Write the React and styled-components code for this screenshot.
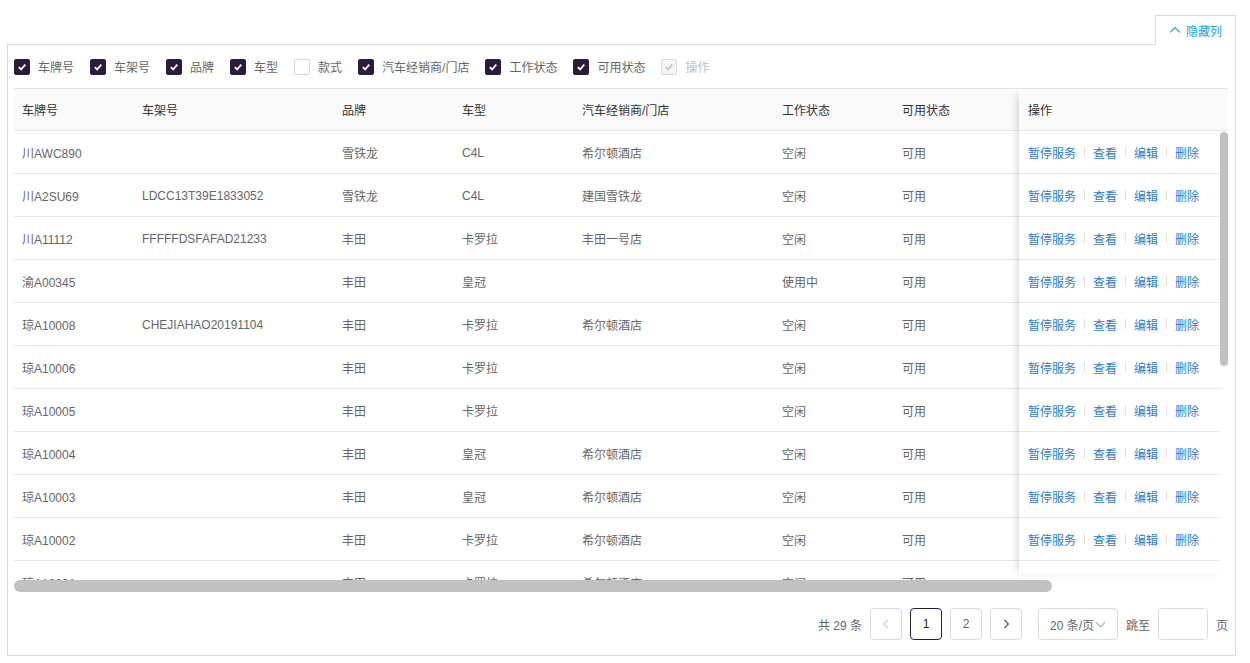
import React from "react";
import styled, { createGlobalStyle } from "styled-components";

const GlobalStyle = createGlobalStyle`
  body {
    margin: 0;
    background: #fff;
    font-family: "Liberation Sans", "Noto Sans CJK SC", sans-serif;
    font-size: 12px;
  }
`;

const COLS = ["120px", "200px", "120px", "120px", "200px", "120px", "120px", "400px"];

const columns = [
  { key: "plate", title: "车牌号" },
  { key: "vin", title: "车架号" },
  { key: "brand", title: "品牌" },
  { key: "model", title: "车型" },
  { key: "shop", title: "汽车经销商/门店" },
  { key: "work", title: "工作状态" },
  { key: "usable", title: "可用状态" },
];

const toggles = [
  { label: "车牌号", checked: true },
  { label: "车架号", checked: true },
  { label: "品牌", checked: true },
  { label: "车型", checked: true },
  { label: "款式", checked: false },
  { label: "汽车经销商/门店", checked: true },
  { label: "工作状态", checked: true },
  { label: "可用状态", checked: true },
  { label: "操作", checked: true, disabled: true },
];

const rows = [
  ["川AWC890", "", "雪铁龙", "C4L", "希尔顿酒店", "空闲", "可用"],
  ["川A2SU69", "LDCC13T39E1833052", "雪铁龙", "C4L", "建国雪铁龙", "空闲", "可用"],
  ["川A11112", "FFFFFDSFAFAD21233", "丰田", "卡罗拉", "丰田一号店", "空闲", "可用"],
  ["渝A00345", "", "丰田", "皇冠", "", "使用中", "可用"],
  ["琼A10008", "CHEJIAHAO20191104", "丰田", "卡罗拉", "希尔顿酒店", "空闲", "可用"],
  ["琼A10006", "", "丰田", "卡罗拉", "", "空闲", "可用"],
  ["琼A10005", "", "丰田", "卡罗拉", "", "空闲", "可用"],
  ["琼A10004", "", "丰田", "皇冠", "希尔顿酒店", "空闲", "可用"],
  ["琼A10003", "", "丰田", "皇冠", "希尔顿酒店", "空闲", "可用"],
  ["琼A10002", "", "丰田", "卡罗拉", "希尔顿酒店", "空闲", "可用"],
  ["琼A10001", "", "丰田", "卡罗拉", "希尔顿酒店", "空闲", "可用"],
];

const actions = ["暂停服务", "查看", "编辑", "删除"];

const CheckIcon = ({ color }) => (
  <svg width="10" height="10" viewBox="0 0 10 10">
    <path d="M1.8 5.2 L4.1 7.4 L8.3 2.6" fill="none" stroke={color} strokeWidth="1.8" />
  </svg>
);

const Chevron = ({ dir = "right", color = "#666", size = 10 }) => {
  const d = {
    left: "M6.5 1.5 L3 5 L6.5 8.5",
    right: "M3.5 1.5 L7 5 L3.5 8.5",
    up: "M1 7 L5 3 L9 7",
    down: "M1 3 L5 7 L9 3",
  }[dir];
  return (
    <svg width={size} height={size} viewBox="0 0 10 10">
      <path d={d} fill="none" stroke={color} strokeWidth="1" />
    </svg>
  );
};

const App = () => {
  return (
    <Page>
      <GlobalStyle />
      <TabRow>
        <HideTab>
          <Chevron dir="up" color="#1ba1e2" size={12} />
          <span>隐藏列</span>
        </HideTab>
      </TabRow>

      <Panel>
        <CheckRow>
          {toggles.map((t) => (
            <CheckItem key={t.label} disabled={t.disabled}>
              <Box checked={t.checked} disabled={t.disabled}>
                {t.checked && <CheckIcon color={t.disabled ? "#c4c4c4" : "#fff"} />}
              </Box>
              <span>{t.label}</span>
            </CheckItem>
          ))}
        </CheckRow>

        <TableWrap>
          <HeadRow>
            {columns.map((c) => (
              <HeadCell key={c.key}>{c.title}</HeadCell>
            ))}
            <HeadCell />
          </HeadRow>
          <BodyViewport>
            {rows.map((r, i) => (
              <BodyRow key={i}>
                {r.map((v, j) => (
                  <Cell key={j}>{v}</Cell>
                ))}
                <Cell />
              </BodyRow>
            ))}
          </BodyViewport>

          <FixedCol>
            <FixedHead>操作</FixedHead>
            {rows.map((r, i) => (
              <FixedCell key={i}>
                {actions.map((a, k) => (
                  <React.Fragment key={a}>
                    {k > 0 && <Divider />}
                    <ActionLink>{a}</ActionLink>
                  </React.Fragment>
                ))}
              </FixedCell>
            ))}
          </FixedCol>

          <VThumb />
        </TableWrap>

        <HTrack>
          <HThumb />
        </HTrack>

        <Pager>
          <Total>共 29 条</Total>
          <PageBtn disabled>
            <Chevron dir="left" color="#c8c8c8" size={12} />
          </PageBtn>
          <PageBtn active>1</PageBtn>
          <PageBtn>2</PageBtn>
          <PageBtn>
            <Chevron dir="right" color="#555" size={12} />
          </PageBtn>
          <SizeSelect>
            <span>20 条/页</span>
            <Chevron dir="down" color="#aaa" size={11} />
          </SizeSelect>
          <JumpLabel>跳至</JumpLabel>
          <JumpInput />
          <JumpLabel>页</JumpLabel>
        </Pager>
      </Panel>
    </Page>
  );
};

const Page = styled.div`
  width: 1229px;
  padding: 15px 14px 6px 7px;
`;

const TabRow = styled.div`
  display: flex;
  justify-content: flex-end;
`;

const HideTab = styled.div`
  position: relative;
  z-index: 1;
  display: flex;
  align-items: center;
  gap: 5px;
  width: 81px;
  height: 30px;
  box-sizing: border-box;
  padding-left: 13px;
  margin-bottom: -1px;
  background: #fff;
  border: 1px solid #d9d9d9;
  border-bottom: 1px solid #fff;
  color: #1ba1e2;
  font-size: 12px;
`;

const Panel = styled.div`
  box-sizing: border-box;
  height: 612px;
  border: 1px solid #d9d9d9;
  padding: 0 6px;
`;

const CheckRow = styled.div`
  display: flex;
  align-items: center;
  height: 43px;
`;

const CheckItem = styled.label`
  display: flex;
  align-items: center;
  gap: 8px;
  margin-right: 16px;
  color: ${({ disabled }) => (disabled ? "#c0c0c0" : "#666")};
  font-size: 12px;
`;

const Box = styled.span`
  display: flex;
  align-items: center;
  justify-content: center;
  width: 16px;
  height: 16px;
  box-sizing: border-box;
  border-radius: 2px;
  border: 1px solid
    ${({ checked, disabled }) => (disabled ? "#d9d9d9" : checked ? "#2b1c3e" : "#d9d9d9")};
  background: ${({ checked, disabled }) => (disabled ? "#f5f5f5" : checked ? "#2b1c3e" : "#fff")};
`;

const TableWrap = styled.div`
  position: relative;
  width: 1214px;
  overflow: hidden;
  border-top: 1px solid #e3e3e3;
`;

const HeadRow = styled.div`
  display: grid;
  grid-template-columns: ${COLS.join(" ")};
  height: 41px;
  align-items: center;
  background: #fafafa;
  border-bottom: 1px solid #e8e8e8;
`;

const HeadCell = styled.div`
  padding-left: 8px;
  color: #333;
  white-space: nowrap;
`;

const BodyViewport = styled.div`
  width: 1206px;
  height: 449px;
  overflow: hidden;
`;

const BodyRow = styled.div`
  display: grid;
  grid-template-columns: ${COLS.join(" ")};
  height: 42px;
  align-items: center;
  border-bottom: 1px solid #e8e8e8;
`;

const Cell = styled.div`
  padding-left: 8px;
  padding-top: 1px;
  color: #666;
  white-space: nowrap;
`;

const FixedCol = styled.div`
  position: absolute;
  top: 0;
  right: 0;
  width: 209px;
  height: 485px;
  overflow: hidden;
  box-shadow: -6px 2px 8px -4px rgba(0, 0, 0, 0.15);
`;

const FixedHead = styled.div`
  display: flex;
  align-items: center;
  height: 41px;
  padding-left: 9px;
  background: #fafafa;
  border-bottom: 1px solid #e8e8e8;
  color: #333;
`;

const FixedCell = styled.div`
  display: flex;
  align-items: center;
  width: 192px;
  height: 42px;
  padding-left: 9px;
  background: #fff;
  border-bottom: 1px solid #e8e8e8;
`;

const ActionLink = styled.a`
  color: #2f7bcb;
  cursor: pointer;
  white-space: nowrap;
`;

const Divider = styled.span`
  width: 1px;
  height: 10px;
  margin: 0 8px;
  background: #e0e0e0;
`;

const VThumb = styled.div`
  position: absolute;
  top: 43px;
  right: 0;
  width: 8px;
  height: 234px;
  border-radius: 4px;
  background: #c1c1c1;
`;

const HTrack = styled.div`
  width: 1206px;
  height: 12px;
`;

const HThumb = styled.div`
  width: 1038px;
  height: 12px;
  border-radius: 6px;
  background: #c1c1c1;
`;

const Pager = styled.div`
  display: flex;
  align-items: center;
  justify-content: flex-end;
  gap: 8px;
  margin-top: 16px;
  padding-right: 1px;
  color: #666;
`;

const Total = styled.span`
  color: #666;
`;

const PageBtn = styled.div`
  display: flex;
  align-items: center;
  justify-content: center;
  width: 32px;
  height: 32px;
  box-sizing: border-box;
  border-radius: 4px;
  border: 1px solid ${({ active }) => (active ? "#2b1c3e" : "#d9d9d9")};
  color: ${({ active }) => (active ? "#2b1c3e" : "#666")};
  font-size: 12px;
`;

const SizeSelect = styled.div`
  display: flex;
  align-items: center;
  justify-content: center;
  gap: 1px;
  width: 80px;
  height: 32px;
  box-sizing: border-box;
  margin-left: 8px;
  border: 1px solid #d9d9d9;
  border-radius: 4px;
  color: #666;
`;

const JumpLabel = styled.span`
  color: #666;
`;

const JumpInput = styled.div`
  width: 50px;
  height: 32px;
  box-sizing: border-box;
  border: 1px solid #d9d9d9;
  border-radius: 4px;
`;

export default App;
